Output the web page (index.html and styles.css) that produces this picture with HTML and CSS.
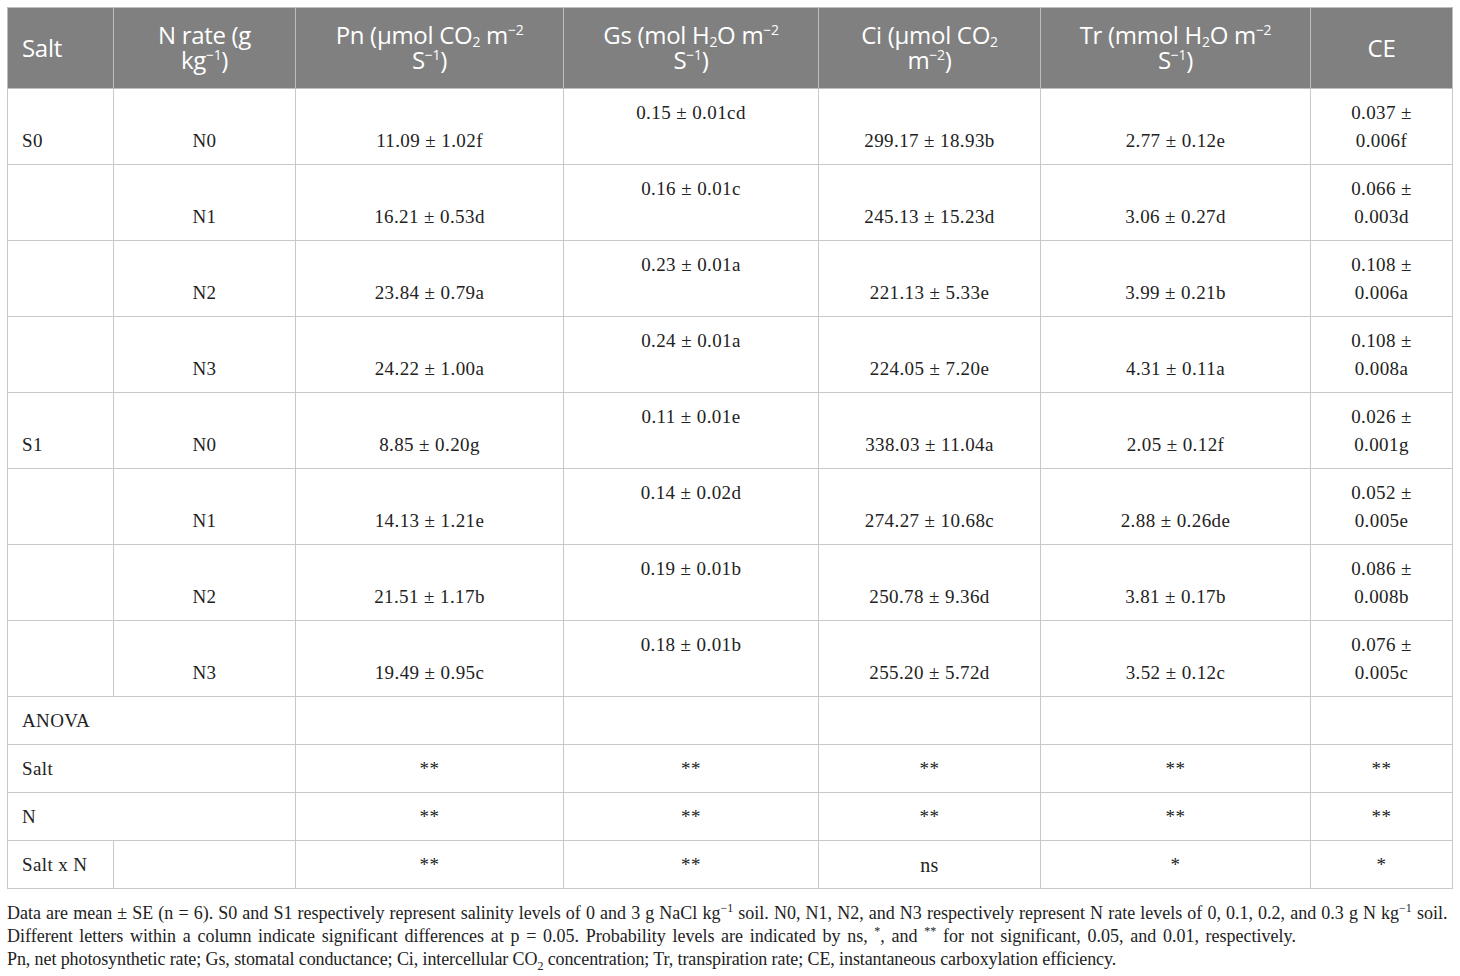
FILE: index.html
```html
<!DOCTYPE html>
<html>
<head>
    <meta charset="UTF-8">
    <title>Photosynthesis under salt and N rate</title>
    <link rel="stylesheet" href="styles.css">
</head>
<body>
    <div class="page">
        <table class="data">
            <colgroup>
                <col class="c-salt">
                <col class="c-n">
                <col class="c-pn">
                <col class="c-gs">
                <col class="c-ci">
                <col class="c-tr">
                <col class="c-ce">
            </colgroup>
            <thead>
                <tr>
                    <th class="left">Salt</th>
                    <th>N rate (g<br>kg<sup>−1</sup>)</th>
                    <th>Pn (μmol CO<sub>2</sub> m<sup>−2</sup><br>S<sup>−1</sup>)</th>
                    <th>Gs (mol H<sub>2</sub>O m<sup>−2</sup><br>S<sup>−1</sup>)</th>
                    <th>Ci (μmol CO<sub>2</sub><br>m<sup>−2</sup>)</th>
                    <th>Tr (mmol H<sub>2</sub>O m<sup>−2</sup><br>S<sup>−1</sup>)</th>
                    <th>CE</th>
                </tr>
            </thead>
            <tbody>
                <tr class="row">
                    <td class="left">S0</td><td>N0</td><td>11.09 ± 1.02f</td><td class="top">0.15 ± 0.01cd</td>
                    <td>299.17 ± 18.93b</td><td>2.77 ± 0.12e</td><td class="ce">0.037 ±<br>0.006f</td>
                </tr>
                <tr class="row">
                    <td class="left"></td><td>N1</td><td>16.21 ± 0.53d</td><td class="top">0.16 ± 0.01c</td>
                    <td>245.13 ± 15.23d</td><td>3.06 ± 0.27d</td><td class="ce">0.066 ±<br>0.003d</td>
                </tr>
                <tr class="row">
                    <td class="left"></td><td>N2</td><td>23.84 ± 0.79a</td><td class="top">0.23 ± 0.01a</td>
                    <td>221.13 ± 5.33e</td><td>3.99 ± 0.21b</td><td class="ce">0.108 ±<br>0.006a</td>
                </tr>
                <tr class="row">
                    <td class="left"></td><td>N3</td><td>24.22 ± 1.00a</td><td class="top">0.24 ± 0.01a</td>
                    <td>224.05 ± 7.20e</td><td>4.31 ± 0.11a</td><td class="ce">0.108 ±<br>0.008a</td>
                </tr>
                <tr class="row">
                    <td class="left">S1</td><td>N0</td><td>8.85 ± 0.20g</td><td class="top">0.11 ± 0.01e</td>
                    <td>338.03 ± 11.04a</td><td>2.05 ± 0.12f</td><td class="ce">0.026 ±<br>0.001g</td>
                </tr>
                <tr class="row">
                    <td class="left"></td><td>N1</td><td>14.13 ± 1.21e</td><td class="top">0.14 ± 0.02d</td>
                    <td>274.27 ± 10.68c</td><td>2.88 ± 0.26de</td><td class="ce">0.052 ±<br>0.005e</td>
                </tr>
                <tr class="row">
                    <td class="left"></td><td>N2</td><td>21.51 ± 1.17b</td><td class="top">0.19 ± 0.01b</td>
                    <td>250.78 ± 9.36d</td><td>3.81 ± 0.17b</td><td class="ce">0.086 ±<br>0.008b</td>
                </tr>
                <tr class="row">
                    <td class="left"></td><td>N3</td><td>19.49 ± 0.95c</td><td class="top">0.18 ± 0.01b</td>
                    <td>255.20 ± 5.72d</td><td>3.52 ± 0.12c</td><td class="ce">0.076 ±<br>0.005c</td>
                </tr>
                <tr class="anova">
                    <td class="left" colspan="2">ANOVA</td><td></td><td></td><td></td><td></td><td></td>
                </tr>
                <tr class="anova">
                    <td class="left" colspan="2">Salt</td><td>**</td><td>**</td><td>**</td><td>**</td><td>**</td>
                </tr>
                <tr class="anova">
                    <td class="left" colspan="2">N</td><td>**</td><td>**</td><td>**</td><td>**</td><td>**</td>
                </tr>
                <tr class="anova">
                    <td class="left">Salt x N</td><td></td><td>**</td><td>**</td><td class="ns">ns</td><td>*</td><td>*</td>
                </tr>
            </tbody>
        </table>

        <div class="notes">
            <p class="l1">Data are mean ± SE (n = 6). S0 and S1 respectively represent salinity levels of 0 and 3 g NaCl kg<sup>−1</sup> soil. N0, N1, N2, and N3 respectively represent N rate levels of 0, 0.1, 0.2, and 0.3 g N kg<sup>−1</sup> soil.</p>
            <p class="l2">Different letters within a column indicate significant differences at p = 0.05. Probability levels are indicated by ns, <sup>*</sup>, and <sup>**</sup> for not significant, 0.05, and 0.01, respectively.</p>
            <p class="l3">Pn, net photosynthetic rate; Gs, stomatal conductance; Ci, intercellular CO<sub>2</sub> concentration; Tr, transpiration rate; CE, instantaneous carboxylation efficiency.</p>
        </div>
    </div>
</body>
</html>
```

FILE: styles.css
```css
* {
    margin: 0;
    padding: 0;
    box-sizing: border-box;
}

body {
    background: #fff;
    color: #222;
    font-family: "Liberation Serif", "Times New Roman", serif;
}

.page {
    padding: 7px 7px 0 7px;
}

.data {
    width: 1446px;
    table-layout: fixed;
    border-collapse: collapse;
    font-size: 19px;
    letter-spacing: 0.4px;
}

.c-salt { width: 106px; }
.c-n { width: 182px; }
.c-pn { width: 268px; }
.c-gs { width: 255px; }
.c-ci { width: 222px; }
.c-tr { width: 270px; }
.c-ce { width: 142px; }

.data th {
    height: 81px;
    background: #808080;
    color: #fff;
    font-family: "Open Sans", "Noto Sans", sans-serif;
    font-weight: normal;
    font-size: 24px;
    line-height: 25px;
    letter-spacing: -0.3px;
    text-align: center;
    vertical-align: middle;
    padding: 0 8px 2px;
    border: 1px solid #bdbdbd;
}

.data th.left {
    text-align: left;
    padding-left: 14px;
}

.data th sup,
.data th sub {
    font-size: 14px;
    line-height: 0;
}

.data th sub {
    vertical-align: -3px;
}

.data th sup {
    vertical-align: 9px;
}

.data td {
    border: 1px solid #c8c8c8;
    text-align: center;
    vertical-align: bottom;
    line-height: 28px;
    padding: 10px 14px 9px;
}

.data td.left {
    text-align: left;
}

.data td.top {
    vertical-align: top;
}

.row td {
    height: 75px;
}

.anova td {
    height: 48px;
    padding: 0 14px;
    vertical-align: middle;
}

.anova td.ns {
    font-size: 20px;
}

.notes {
    padding-top: 13px;
    font-size: 18px;
    line-height: 23px;
    color: #222;
    white-space: nowrap;
}

.notes .l1 {
    word-spacing: 0.6px;
}

.notes .l2 {
    word-spacing: 2.2px;
}

.notes .l3 {
    letter-spacing: -0.1px;
}

.notes sup,
.notes sub {
    font-size: 12px;
    line-height: 0;
}
```
